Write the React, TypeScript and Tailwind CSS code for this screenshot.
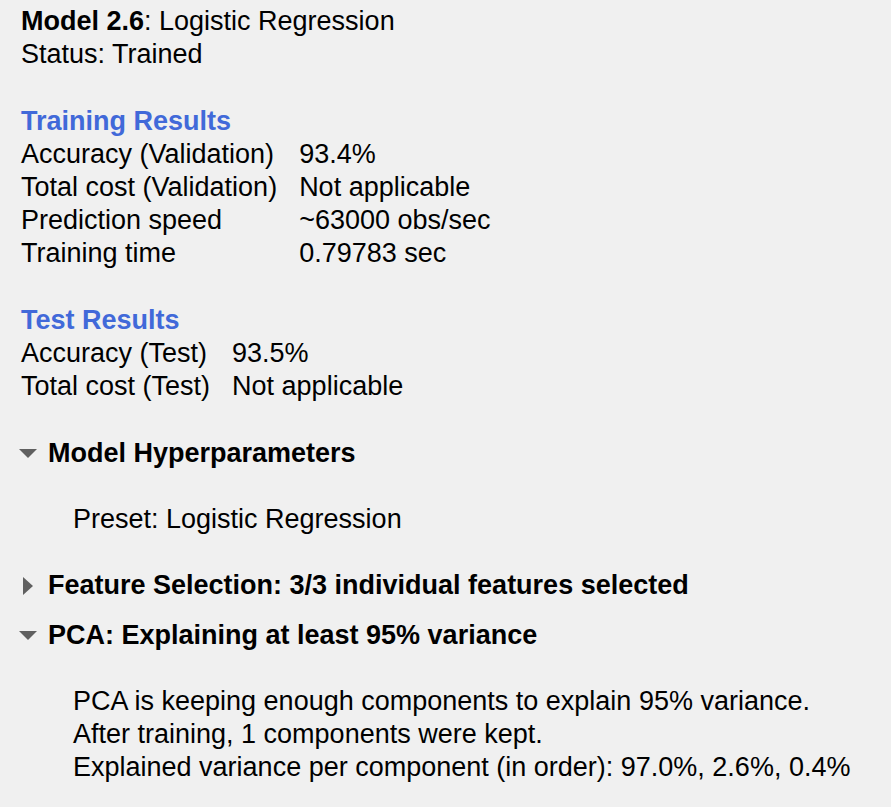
import { useState } from "react";
import type { ReactNode } from "react";

type Row = [string, string];

function Results({ title, rows }: { title: string; rows: Row[] }) {
  return (
    <section className="mt-[34px]">
      <h2 className="font-bold text-[#4169d9]">{title}</h2>
      <table className="border-collapse">
        <tbody>
          {rows.map(([label, value]) => (
            <tr key={label}>
              <th scope="row" className="p-0 pr-[22px] text-left font-normal">{label}</th>
              <td className="p-0">{value}</td>
            </tr>
          ))}
        </tbody>
      </table>
    </section>
  );
}

function Disclosure({ title, initiallyOpen = false, children }: { title: string; initiallyOpen?: boolean; children: ReactNode }) {
  const [open, setOpen] = useState(initiallyOpen);
  return (
    <section>
      <button type="button" aria-expanded={open} onClick={() => setOpen(!open)} className="flex items-center gap-[11px] text-left font-bold">
        <svg aria-hidden="true" viewBox="0 0 18 18" className="size-[18px] shrink-0 fill-[#606060]">
          {open ? <path d="M0 4h18L9 13z" /> : <path d="M4 0v18l10-9z" />}
        </svg>
        {title}
      </button>
      {open && <div className="py-[33px] pl-[54px]">{children}</div>}
    </section>
  );
}

export default function App() {
  return (
    <main className="min-h-screen bg-[#f0f0f0] px-[21px] pt-[5px] font-['Liberation_Sans',Arial,sans-serif] text-[27px] leading-[33px] text-black">
      <p><strong>Model 2.6</strong>: Logistic Regression</p>
      <p>Status: Trained</p>
      <Results
        title="Training Results"
        rows={[
          ["Accuracy (Validation)", "93.4%"],
          ["Total cost (Validation)", "Not applicable"],
          ["Prediction speed", "~63000 obs/sec"],
          ["Training time", "0.79783 sec"],
        ]}
      />
      <Results
        title="Test Results"
        rows={[
          ["Accuracy (Test)", "93.5%"],
          ["Total cost (Test)", "Not applicable"],
        ]}
      />
      <div className="-ml-0.5 mt-[34px]">
        <Disclosure title="Model Hyperparameters" initiallyOpen>
          <p>Preset: Logistic Regression</p>
        </Disclosure>
        <div className="flex flex-col gap-[17px]">
          <Disclosure title="Feature Selection: 3/3 individual features selected">
            <p>3 of 3 individual features selected</p>
          </Disclosure>
          <Disclosure title="PCA: Explaining at least 95% variance" initiallyOpen>
            <p>PCA is keeping enough components to explain 95% variance.</p>
            <p>After training, 1 components were kept.</p>
            <p>Explained variance per component (in order): 97.0%, 2.6%, 0.4%</p>
          </Disclosure>
        </div>
      </div>
    </main>
  );
}
